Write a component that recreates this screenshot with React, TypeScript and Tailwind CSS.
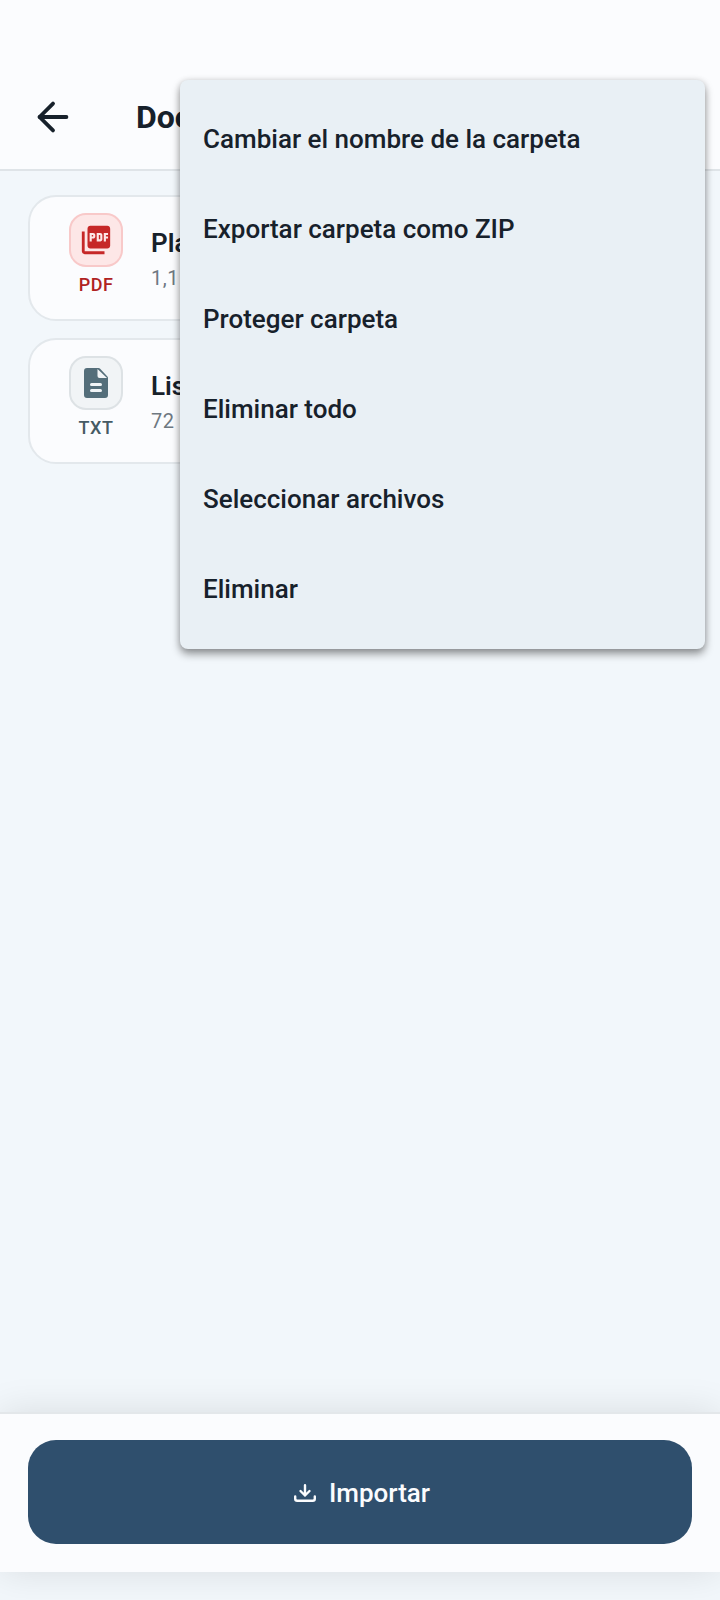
import { ArrowLeft } from "lucide-react";
import { MdPictureAsPdf } from "react-icons/md";

const MENU_ITEMS = [
  "Cambiar el nombre de la carpeta",
  "Exportar carpeta como ZIP",
  "Proteger carpeta",
  "Eliminar todo",
  "Seleccionar archivos",
  "Eliminar",
];

// rounded file glyph, the package versions have longer square bars
const TxtIcon = () => (
  <svg viewBox="0 0 24 30" className="h-[30px] w-[24px]" fill="#546e7a">
    <path d="M3 0h11.5a2 2 0 0 1 1.4.6l7.5 7.8a2 2 0 0 1 .6 1.4V27a3 3 0 0 1-3 3H3a3 3 0 0 1-3-3V3a3 3 0 0 1 3-3z" />
    <path d="M13.5 1v7a2 2 0 0 0 2 2h7.5z" fill="#f1f4f6" />
    <rect x="6" y="15" width="12" height="3" rx="1.5" fill="#f1f4f6" />
    <rect x="6" y="21" width="12" height="3" rx="1.5" fill="#f1f4f6" />
  </svg>
);

const ImportIcon = () => (
  <svg
    viewBox="0 0 22 19"
    className="h-[19px] w-[22px]"
    fill="none"
    stroke="currentColor"
    strokeWidth="2.4"
    strokeLinecap="round"
    strokeLinejoin="round"
  >
    <path d="M11 1.2v10.3M6.5 7l4.5 4.5L15.5 7" />
    <path d="M1.2 12.5v2.3a2 2 0 0 0 2 2h15.6a2 2 0 0 0 2-2v-2.3" />
  </svg>
);

const FileCard = ({
  icon,
  badgeClass,
  label,
  labelClass,
  name,
  size,
}: {
  icon: React.ReactNode;
  badgeClass: string;
  label: string;
  labelClass: string;
  name: string;
  size: string;
}) => (
  <div className="flex h-[126px] items-start rounded-[28px] border-2 border-[#e3e8ec] bg-[#fbfcfe] pt-[16px] pl-[39px]">
    <div className="flex w-[54px] flex-col items-center">
      <div
        className={`flex h-[54px] w-[54px] items-center justify-center rounded-[17px] border-2 ${badgeClass}`}
      >
        {icon}
      </div>
      <span className={`mt-[6px] text-[18px] leading-[24px] font-medium tracking-[0.5px] ${labelClass}`}>
        {label}
      </span>
    </div>
    <div className="mt-[13px] ml-[28px] flex flex-col">
      <span className="text-[26px] leading-[34px] font-semibold text-[#17212b]">{name}</span>
      <span className="mt-[5px] text-[20px] leading-[26px] tracking-[0.5px] text-[#6e7881]">{size}</span>
    </div>
  </div>
);

export default function App() {
  return (
    <div
      className="relative flex h-[1600px] w-[720px] flex-col overflow-hidden bg-[#f2f7fb]"
      style={{ fontFamily: "Roboto, sans-serif" }}
    >
      {/* Header */}
      <header className="flex h-[171px] shrink-0 items-end border-b-2 border-[#dfe4e8] bg-[#fbfcfe] pb-[29px] pl-[30px]">
        <div className="flex h-[46px] items-center">
          <ArrowLeft size={46} strokeWidth={2} color="#17212b" />
          <h1 className="ml-[60px] text-[32px] leading-[38px] font-bold text-[#17212b]">Documentos</h1>
        </div>
      </header>

      {/* File list */}
      <main className="flex flex-1 flex-col gap-[17px] px-[28px] pt-[24px]">
        <FileCard
          icon={<MdPictureAsPdf size={34} color="#c62828" />}
          badgeClass="border-[#f8c9c9] bg-[#fde7e7]"
          label="PDF"
          labelClass="text-[#b02222]"
          name="Plano.pdf"
          size="1,1 MB"
        />
        <FileCard
          icon={<TxtIcon />}
          badgeClass="border-[#dde2e5] bg-[#f1f4f6]"
          label="TXT"
          labelClass="text-[#455a64]"
          name="Lista.txt"
          size="72 KB"
        />
      </main>

      {/* Bottom bar */}
      <div className="mb-[28px] shrink-0 border-t-2 border-[#e3e7ea] bg-[#fbfcfe] px-[28px] pt-[26px] pb-[28px] shadow-[0_0_36px_rgba(0,0,0,0.11)]">
        <button className="flex h-[104px] w-full items-center justify-center gap-[13px] rounded-[28px] bg-[#2f4f6d] pt-[2px] pl-[4px] text-[26px] font-medium text-[#fbfcfe]">
          <ImportIcon />
          Importar
        </button>
      </div>

      {/* Overflow menu */}
      <div className="absolute top-[80px] left-[180px] flex h-[569px] w-[525px] flex-col rounded-[8px] bg-[#e9f0f5] py-[14px] shadow-[0_5px_8px_rgba(0,0,0,0.4),0_0_6px_rgba(0,0,0,0.12)]">
        {MENU_ITEMS.map((item) => (
          <div
            key={item}
            className="flex h-[90px] items-center px-[23px] text-[26px] font-medium text-[#17212b]"
          >
            {item}
          </div>
        ))}
      </div>
    </div>
  );
}
